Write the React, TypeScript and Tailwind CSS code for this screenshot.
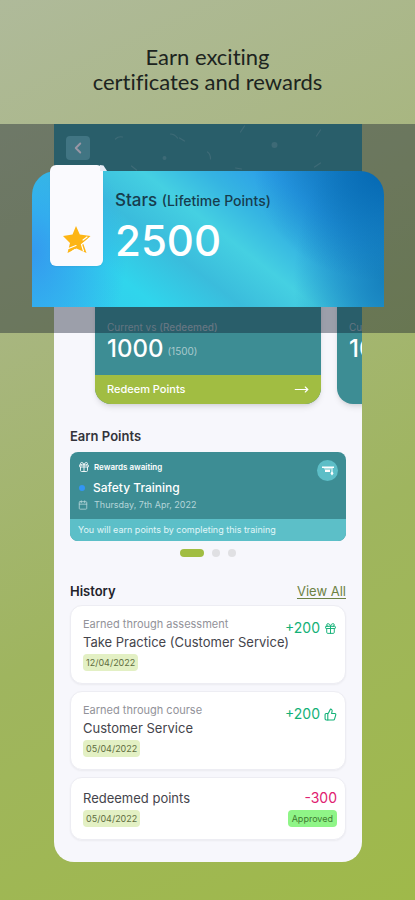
import { Calendar, ChevronLeft, Gift, MoveRight, ThumbsUp } from "lucide-react";
import type { ReactNode } from "react";

function Confetti() {
  return (
    <svg className="absolute inset-x-0 top-0 h-[50px] w-full" viewBox="0 0 307 50" fill="none" stroke="#8fc0c6" strokeOpacity="0.4" strokeWidth="1.2" strokeLinecap="round" aria-hidden="true">
      <path d="M61 15q3-3 7-2M116 10q4 0 7 4M125 14l5 3M77 42l5 4M186 8l4-6M153 28q3 2 3 7M262 12l4-6M181 44l6 1M260 43l6-4" />
      <g fill="#8fc0c6" fillOpacity="0.4" stroke="none">
        <circle cx="110" cy="34" r="2" />
        <circle cx="220" cy="21" r="3" />
      </g>
    </svg>
  );
}

function StarIcon() {
  return (
    <svg className="h-7 w-7" viewBox="0 0 28 28" aria-hidden="true">
      <path fill="#fdb515" d="M13 0 16.800 8.600 27.500 10 20 17 23.500 27 13.500 22.500 4.500 27 7 17 0 10 9.500 8.600Z" />
      <path stroke="#fff" strokeWidth="1.200" fill="none" strokeLinecap="round" d="M26.500 12.500 18.500 18.500 20.500 25M24 11 20 14M5.500 22.500 13 19.500M9 25.500l3-2" />
    </svg>
  );
}

function HistoryCard({ label, title, date, children }: { label?: string; title: string; date: string; children: ReactNode }) {
  return (
    <li className="flex justify-between rounded-xl border border-[#ededf3] bg-white pt-[10px] pr-2 pb-3 pl-3 shadow-xs">
      <div className="min-w-0">
        {label && <p className="text-[11px] leading-4 whitespace-nowrap text-[#929299]">{label}</p>}
        <h3 className="text-[13px] leading-5 whitespace-nowrap text-[#44444b]">{title}</h3>
        <time className="mt-[2px] block w-fit rounded-sm bg-[#e3f0c4] px-[3px] text-[9px] leading-[17px] text-[#5f6d40]">{date}</time>
      </div>
      {children}
    </li>
  );
}

export default function App() {
  return (
    <main className="flex min-h-screen flex-col bg-[linear-gradient(155deg,#afba9a_0%,#a8b680_30%,#9fb55f_62%,#9fb94a_100%)] pb-[38px] font-[Inter,'Noto_Sans',sans-serif]">
      <h1 className="pt-11 text-center font-[Lato,sans-serif] text-[22px] leading-[25px] text-[#1c2420] [font-variant-ligatures:none]">
        Earn exciting
        <br />
        certificates and rewards
      </h1>

      <div className="relative mt-[30px]">
        <div className="mr-[53px] ml-[54px] overflow-hidden rounded-b-[20px] bg-[#f7f7fc]">
          <header className="relative h-[130px] bg-[#3d8d94] px-3 pt-3">
            <Confetti />
            <button type="button" aria-label="Back" className="relative flex h-6 w-6 items-center justify-center rounded-sm bg-[#63b3bc] text-[#f3e9f4]">
              <ChevronLeft size={18} strokeWidth={2.5} />
            </button>
          </header>

          <div className="flex h-[150px] gap-4 pl-[41px]">
            <article className="flex w-[226px] shrink-0 flex-col overflow-hidden rounded-b-2xl bg-[#3d8d94] shadow-md">
              <div className="flex flex-1 flex-col justify-end px-3 pb-3">
                <p className="text-[10px] leading-4 text-[#9db4bb]">
                  Current vs <span className="font-medium">(Redeemed)</span>
                </p>
                <p className="flex items-center gap-1 text-2xl leading-7 font-medium text-white">
                  1000 <span className="pt-1 text-[10px] leading-4 font-normal text-[#a9c9cd]">(1500)</span>
                </p>
              </div>
              <button type="button" className="flex h-[29px] items-center justify-between bg-[#a1bd42] px-3 text-[11px] font-medium text-white">
                Redeem Points
                <MoveRight size={15} strokeWidth={1.75} />
              </button>
            </article>
            <article className="flex w-[226px] shrink-0 flex-col justify-end rounded-b-2xl bg-[#3d8d94] px-3 pb-[41px] shadow-md">
              <p className="text-[10px] leading-4 text-[#9db4bb]">Current</p>
              <p className="text-2xl leading-7 font-medium text-white">1000</p>
            </article>
          </div>

          <section className="px-4 pt-[22px]">
            <h2 className="text-[13px] leading-5 font-semibold text-[#33333a]">Earn Points</h2>
            <article className="mt-[6px] overflow-hidden rounded-lg bg-[#3d8d94] text-white">
              <div className="flex justify-between px-2 pt-2">
                <div className="pb-[6px]">
                  <p className="flex h-[14px] items-center gap-1 text-[8px] font-semibold">
                    <Gift size={12} strokeWidth={1.75} /> Rewards awaiting
                  </p>
                  <p className="mt-[5px] flex items-center text-xs leading-[18px] font-medium whitespace-nowrap">
                    <span className="mr-2 ml-px h-[6px] w-[6px] rounded-full bg-[#3295f5]" />
                    Safety Training
                  </p>
                  <p className="flex h-4 items-center gap-[6px] text-[9px] whitespace-nowrap text-[#b4d5d9]">
                    <Calendar size={10} strokeWidth={2} /> Thursday, 7th Apr, 2022
                  </p>
                </div>
                <span className="flex h-[21px] w-[21px] items-center justify-center rounded-full bg-[#5dbec7]">
                  <svg className="h-3 w-3" viewBox="0 0 12 12" aria-hidden="true">
                    <path fill="#fff" d="M0 1.500h12v1.500H0zM1.500 3.500h8l-1.500 1h-5zM3 5h5v2H3zM9.500 3h1v3.500l1 2-1.500 2-1.500-2 1-2z" />
                  </svg>
                </span>
              </div>
              <p className="bg-[#5cbfc8] px-2 text-[9px] leading-[22px] text-[#e0f6f8]">You will earn points by completing this training</p>
            </article>
            <div className="mt-2 flex h-2 items-center justify-center gap-2">
              <span className="h-2 w-6 rounded-full bg-[#a1bd42]" />
              <span className="h-2 w-2 rounded-full bg-[#e0e0e3]" />
              <span className="h-2 w-2 rounded-full bg-[#e0e0e3]" />
            </div>
          </section>

          <section className="px-4 pt-6 pb-[22px]">
            <div className="flex items-center justify-between leading-5">
              <h2 className="text-[13px] font-semibold text-[#22222a]">History</h2>
              <a href="#history" className="text-[13px] text-[#6c8143] underline underline-offset-2">View All</a>
            </div>
            <ul className="mt-1 flex flex-col gap-[7px]">
              <HistoryCard label="Earned through assessment" title="Take Practice (Customer Service)" date="12/04/2022">
                <p className="-ml-4 flex h-6 items-center gap-1 text-sm text-[#12b177]">
                  +200 <Gift size={13} strokeWidth={1.75} />
                </p>
              </HistoryCard>
              <HistoryCard label="Earned through course" title="Customer Service" date="05/04/2022">
                <p className="flex h-6 items-center gap-1 text-sm text-[#12b177]">
                  +200 <ThumbsUp size={13} strokeWidth={2} />
                </p>
              </HistoryCard>
              <HistoryCard title="Redeemed points" date="05/04/2022">
                <div className="text-right">
                  <p className="text-sm leading-5 text-[#e02070]">-300</p>
                  <p className="mt-[2px] rounded-sm bg-[#8ff587] px-1 text-[9px] leading-[17px] text-[#3f7a31]">Approved</p>
                </div>
              </HistoryCard>
            </ul>
          </section>
        </div>

        <div className="absolute inset-x-0 top-0 h-[209px] bg-[rgba(11,17,39,0.385)]" />

        <section className="absolute top-[47px] right-[31px] left-8 h-[136px] rounded-t-3xl bg-[radial-gradient(ellipse_95px_130px_at_0%_60%,#349aef_0%,#349aef00_100%),radial-gradient(ellipse_130px_110px_at_100%_0%,#0569b3_0%,#0569b300_100%),radial-gradient(ellipse_90px_150px_at_100%_80%,#1681bd_0%,#1681bd00_100%),linear-gradient(38deg,#31c8ee_0%,#30d5ec_24%,#3abcdc_40%,#45d0e2_54%,#35b4e2_66%,#2c9fe8_78%,#1c84cc_100%)]">
          <div className="absolute -top-[6px] left-[18px] flex h-[101px] w-[53px] items-end justify-center rounded-md bg-[#fafafe] pb-3 shadow-xs">
            <StarIcon />
          </div>
          <span className="absolute -top-[6px] left-[68px] h-[6px] w-[7px] bg-[#e7ebf5] [clip-path:polygon(0_0,50%_10%,100%_100%,0_100%)]" />
          <div className="pt-[19px] pl-[83px] whitespace-nowrap">
            <h2 className="text-[17px] leading-5 font-medium text-[#173c4d]">
              Stars <span className="text-sm">(Lifetime Points)</span>
            </h2>
            <p className="mt-[6px] text-[42px] leading-[48px] font-medium text-white">2500</p>
          </div>
        </section>
      </div>
    </main>
  );
}
